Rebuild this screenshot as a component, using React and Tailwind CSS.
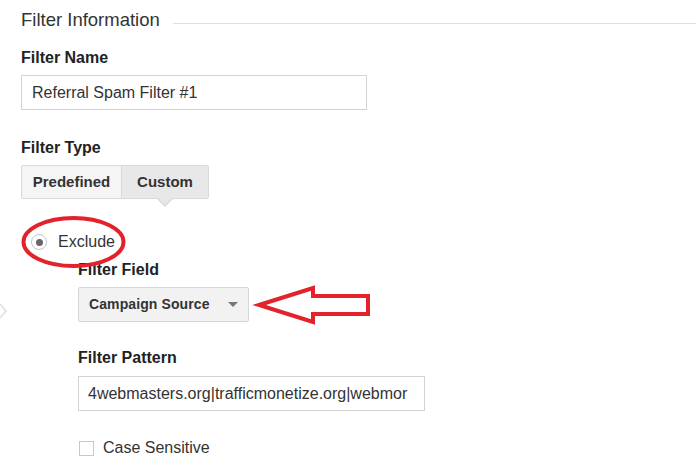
import React from "react";

const font = { fontFamily: '"Liberation Sans", Arial, sans-serif' };

function Label({ children, className = "" }) {
  return (
    <div className={`h-[20px] text-[16px] leading-[22px] font-bold text-[#222] ${className}`}>
      {children}
    </div>
  );
}

export default function App() {
  return (
    <div className="relative h-[472px] w-[696px] overflow-hidden bg-white text-[#333]" style={font}>
      {/* faint chevron from side panel */}
      <svg className="absolute left-0 top-[302px]" width="8" height="18" viewBox="0 0 8 18">
        <path d="M0 2 L6 9 L0 16" fill="none" stroke="#e6e6e6" strokeWidth="2" />
      </svg>

      <div className="pl-[21px] pt-[10px]">
        <div className="flex h-[20px] items-center gap-[13px]">
          <span className="text-[18.5px] leading-[22px] text-[#333]">Filter Information</span>
          <div className="mt-[6px] h-px flex-1 bg-[#e0e0e0]" />
        </div>

        <Label className="mt-[17px]">Filter Name</Label>
        <div className="mt-[8px] flex h-[35px] w-[346px] items-center border border-[#d4d4d4] px-[10px] text-[16px]">
          Referral Spam Filter #1
        </div>

        <Label className="mt-[27px]">Filter Type</Label>
        <div className="relative mt-[8px] flex h-[34px] w-[188px] rounded-[2px] border border-[#d9d9d9] text-[15px] font-bold text-[#333]">
          <div className="flex w-[99px] items-center justify-center bg-[#f5f5f5] pt-[1px]">Predefined</div>
          <div className="flex flex-1 items-center justify-center border-l border-[#d9d9d9] bg-[#e8e8e8] pt-[1px]">Custom</div>
          <div className="absolute left-[134px] top-[32px] h-0 w-0 border-x-[9px] border-t-[9px] border-x-transparent border-t-[#d9d9d9]" />
          <div className="absolute left-[135px] top-[31px] h-0 w-0 border-x-[8px] border-t-[8px] border-x-transparent border-t-[#e8e8e8]" />
        </div>

        <div className="mt-[33px] flex h-[20px] items-center">
          <div className="ml-[10px] flex h-[16px] w-[16px] items-center justify-center rounded-full border border-[#c4c4c4] bg-white">
            <div className="h-[7px] w-[7px] rounded-full bg-[#666]" />
          </div>
          <span className="ml-[11px] text-[16px] leading-[22px]">Exclude</span>
        </div>

        <div className="pl-[57px]">
          <Label className="mt-[7px]">Filter Field</Label>
          <div className="mt-[8px] flex h-[35px] w-[171px] items-center justify-between rounded-[2px] border border-[#d6d6d6] bg-[#f2f2f2] pl-[10px] pr-[10px] text-[14px] font-bold tracking-[0.1px] text-[#333]">
            <span>Campaign Source</span>
            <span className="h-0 w-0 border-x-[5px] border-t-[5px] border-x-transparent border-t-[#777]" />
          </div>

          <Label className="mt-[25px]">Filter Pattern</Label>
          <div className="mt-[9px] flex h-[35px] w-[347px] items-center overflow-hidden whitespace-nowrap border border-[#d4d4d4] pl-[9px] text-[16px]">
            4webmasters.org|trafficmonetize.org|webmor
          </div>

          <div className="mt-[27px] flex h-[20px] items-center">
            <div className="ml-[1px] h-[15px] w-[15px] border border-[#c8c8c8] bg-white" />
            <span className="ml-[9px] text-[16px] leading-[22px]">Case Sensitive</span>
          </div>
        </div>
      </div>

      {/* annotations */}
      <svg className="pointer-events-none absolute left-0 top-0" width="696" height="472">
        <ellipse cx="73.5" cy="242" rx="50" ry="24" fill="none" stroke="#e3222b" strokeWidth="4" />
        <polygon
          points="259,305 313,288 313,296 368,296 368,314 313,314 313,322"
          fill="none"
          stroke="#e3222b"
          strokeWidth="4"
          strokeLinejoin="miter"
        />
      </svg>
    </div>
  );
}
